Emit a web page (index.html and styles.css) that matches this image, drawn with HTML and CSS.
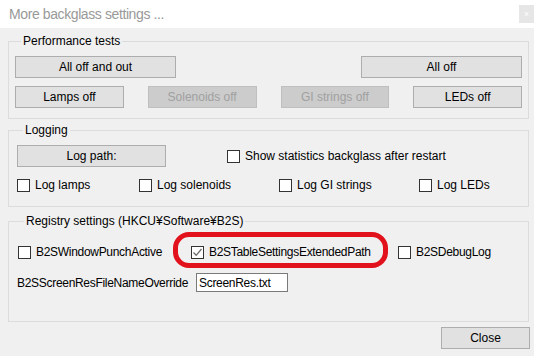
FILE: index.html
```html
<!DOCTYPE html>
<html lang="en">
<head>
    <meta charset="UTF-8">
    <title>More backglass settings</title>
    <link rel="stylesheet" href="styles.css">
</head>
<body>

    <div class="window">
        <!-- Title bar -->
        <div class="titlebar">
            <span class="title">More backglass settings ...</span>
            <span class="close-box">&times;</span>
        </div>

        <div class="client">
            <!-- Performance tests -->
            <fieldset class="group perf">
                <legend>Performance tests</legend>
                <div class="row spread">
                    <button class="btn wide">All off and out</button>
                    <button class="btn wide">All off</button>
                </div>
                <div class="row four">
                    <button class="btn">Lamps off</button>
                    <button class="btn" disabled>Solenoids off</button>
                    <button class="btn" disabled>GI strings off</button>
                    <button class="btn">LEDs off</button>
                </div>
            </fieldset>

            <!-- Logging -->
            <fieldset class="group logging">
                <legend>Logging</legend>
                <div class="row path-row">
                    <button class="btn path">Log path:</button>
                    <label class="check"><span class="box"></span>Show statistics backglass after restart</label>
                </div>
                <div class="row log-checks">
                    <label class="check c1"><span class="box"></span>Log lamps</label>
                    <label class="check c2"><span class="box"></span>Log solenoids</label>
                    <label class="check c3"><span class="box"></span>Log GI strings</label>
                    <label class="check"><span class="box"></span>Log LEDs</label>
                </div>
            </fieldset>

            <!-- Registry settings -->
            <fieldset class="group registry">
                <legend>Registry settings (HKCU&yen;Software&yen;B2S)</legend>
                <div class="row reg-checks">
                    <label class="check r1"><span class="box"></span>B2SWindowPunchActive</label>
                    <label class="check r2 marked">
                        <span class="box checked">
                            <svg width="11" height="11" viewBox="0 0 11 11"><path d="M1.5 5.5 L4.2 8.3 L9.5 2" fill="none" stroke="#6d6d6d" stroke-width="1.3"/></svg>
                        </span>B2STableSettingsExtendedPath
                    </label>
                    <label class="check"><span class="box"></span>B2SDebugLog</label>
                </div>
                <div class="row override">
                    <span class="field-label">B2SScreenResFileNameOverride</span>
                    <input class="text" type="text" value="ScreenRes.txt">
                </div>
            </fieldset>

            <div class="footer">
                <button class="btn close-btn">Close</button>
            </div>
        </div>
    </div>

</body>
</html>
```

FILE: styles.css
```css
/* Whole dialog */
html, body {
    margin: 0;
    height: 100%;
    background-color: #f0f0f0;
}

body {
    font-family: 'Liberation Sans', Arial, sans-serif;
    font-size: 12px;
    color: #000;
}

.window {
    width: 534px;
    height: 356px;
    background-color: #f0f0f0;
    overflow: hidden;
}

/* Title bar */
.titlebar {
    height: 28px;
    background-color: #fff;
    display: flex;
    align-items: center;
    justify-content: space-between;
    padding-left: 9px;
}

.title {
    font-size: 14px;
    color: #999;
    letter-spacing: -0.4px;
}

.close-box {
    width: 15px;
    height: 18px;
    background-color: #e6e6e6;
    color: #fff;
    font-size: 9px;
    line-height: 18px;
    text-align: center;
}

.client {
    padding: 6px 5px 0 8px;
}

/* Group boxes */
.group {
    margin: 0;
    padding: 0 6px;
    border: 1px solid #dcdcdc;
    min-width: 0;
}

.group legend {
    margin-left: 6px;
    padding: 0 2px;
    line-height: 14px;
}

.group + .group {
    margin-top: 4px;
}

.row {
    display: flex;
    align-items: center;
}

/* Buttons */
.btn {
    font-family: inherit;
    font-size: 12px;
    height: 22px;
    padding: 0;
    background-color: #e1e1e1;
    border: 1px solid #adadad;
    color: #000;
}

.btn:disabled {
    background-color: #cccccc;
    border-color: #bfbfbf;
    color: #a0a0a0;
}

.perf {
    padding-top: 8px;
    padding-bottom: 10px;
}

.spread {
    justify-content: space-between;
}

.wide {
    width: 161px;
}

.four {
    margin-top: 8px;
    gap: 24px;
}

.four .btn {
    width: 109px;
}

/* Logging */
.logging {
    padding: 8px 8px 14px;
}

.path {
    width: 149px;
}

.path-row .check {
    margin-left: 61px;
}

.log-checks {
    margin-top: 11px;
}

.c1 { width: 122px; }
.c2 { width: 140px; }
.c3 { width: 140px; }

/* Checkboxes */
.check {
    display: flex;
    align-items: center;
    gap: 5px;
    white-space: nowrap;
}

.box {
    width: 11px;
    height: 11px;
    border: 1px solid #333;
    background-color: #fff;
    display: flex;
    align-items: center;
    justify-content: center;
}

/* Registry settings */
.group.registry {
    margin-top: 7px;
    padding: 17px 8px 29px 9px;
    letter-spacing: -0.3px;
}

.registry legend {
    letter-spacing: 0;
}

.reg-checks {
    height: 14px;
}

.r1 { width: 173px; }
.r2 { width: 207px; }

/* hand-drawn red marker round the extended path option */
.marked {
    position: relative;
}

.marked::after {
    content: "";
    position: absolute;
    left: -18px;
    top: -13px;
    width: 205px;
    height: 26px;
    border: 5px solid #e2121c;
    border-radius: 16px;
}

.override {
    margin-top: 14px;
    margin-left: -1px;
}

.field-label {
    width: 179px;
}

.text {
    width: 88px;
    height: 17px;
    padding: 0 0 0 2px;
    border: 1px solid #7a7a7a;
    font-family: inherit;
    font-size: 12px;
    letter-spacing: -0.3px;
    box-sizing: content-box;
}

/* Footer */
.footer {
    display: flex;
    justify-content: flex-end;
    padding-top: 5px;
}

.close-btn {
    width: 89px;
    margin-right: -1px;
}
```
